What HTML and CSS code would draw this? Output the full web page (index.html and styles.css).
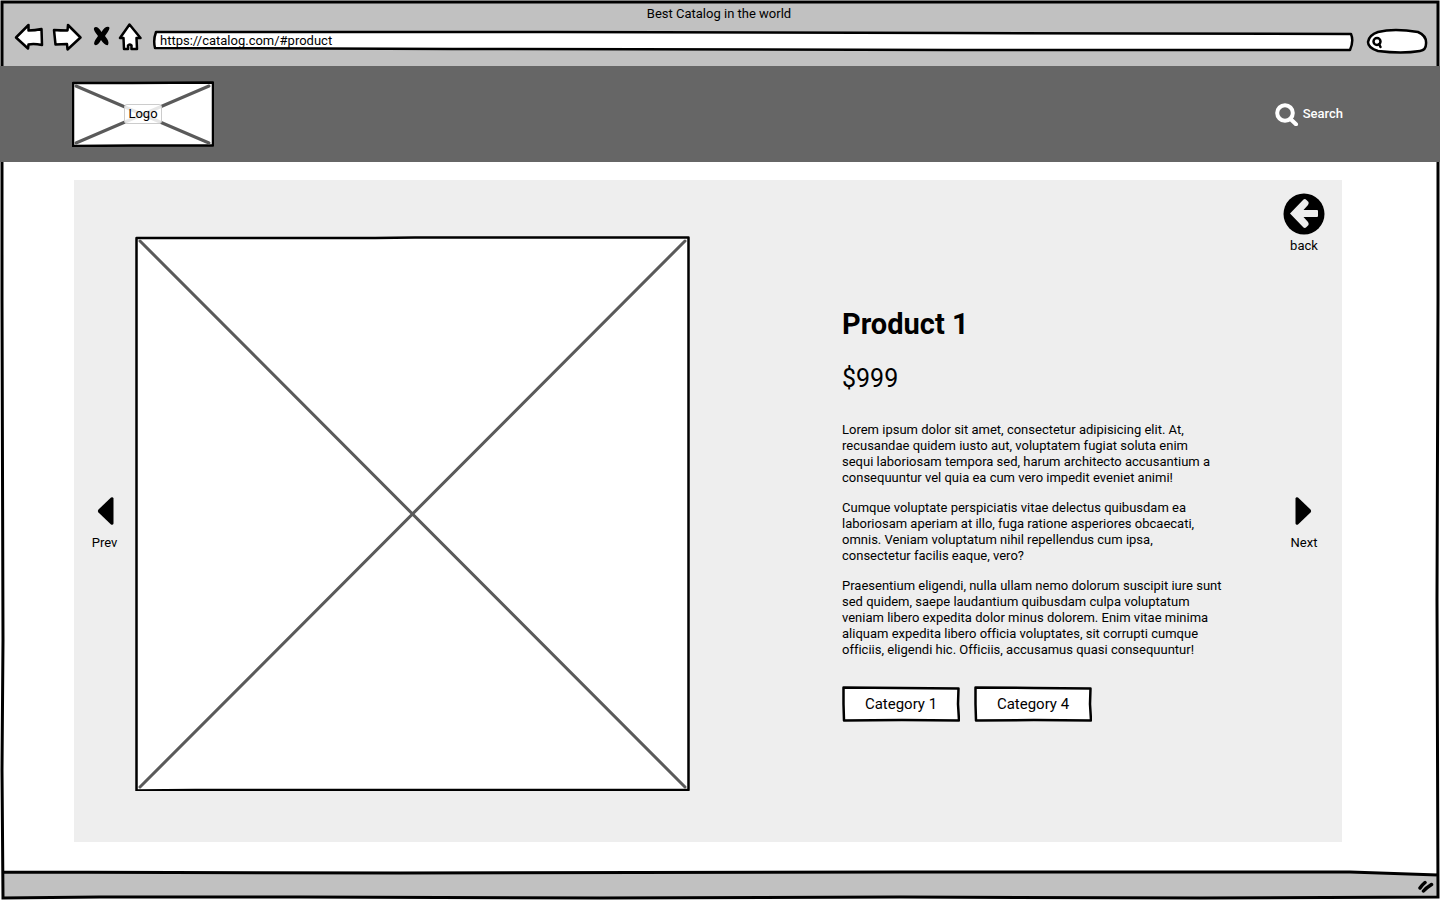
FILE: index.html
```html
<!DOCTYPE html>
<html lang="en">
<head>
<meta charset="utf-8">
<title>Best Catalog in the world</title>
<link rel="stylesheet" href="styles.css">
</head>
<body>
<div class="window">
  <svg class="outline" viewBox="0 0 1440 900" preserveAspectRatio="none" aria-hidden="true">
    <path class="bar-fill" d="M2 2H1438V70H2Z M3 872H1350L1438 875V897L3 898Z"/>
    <path class="line" d="M2 2H1438V300L1437 600L1438 897L1200 898L900 897L600 898L300 897L100 897L3 898L2 770L3 640L2 300Z M3 872L400 873L900 872L1350 872L1438 875"/>
  </svg>

  <div class="chrome">
    <div class="chrome-title">Best Catalog in the world</div>
    <div class="toolbar">
      <div class="tools">
        <button type="button" class="tool" aria-label="Back"><svg width="30" height="28" viewBox="15 23 30 28"><path class="sketch" d="M17 37.500L29.500 25V30.500Q36 30.500 42.500 29L43 45Q35 43.500 29.500 44.500L29 48.500Z"/></svg></button>
        <button type="button" class="tool" aria-label="Forward"><svg width="30" height="28" viewBox="52 23 30 28"><path class="sketch" d="M80.500 37.500L68 25L67.500 30.500Q60 30.500 54 30L55.500 44.500L67 44L67.500 49.500Z"/></svg></button>
        <button type="button" class="tool tool-stop" aria-label="Stop"><svg width="20" height="28" viewBox="92 23 20 28"><path d="M94 28Q97 25 101.500 32Q105 26 109 27Q111 28 105 36Q110 42 108 45Q105 46 101 40Q98 46 95 45Q92 44 98 36Q93 30 94 28Z"/></svg></button>
        <button type="button" class="tool" aria-label="Home"><svg width="24" height="28" viewBox="118 23 24 28"><path class="sketch" d="M129.500 24.500L120 38H123.500L124 49H128V45.500Q129.500 43.500 131.500 45.500V49H137L136.500 38H140.500Z"/></svg></button>
      </div>
      <div class="address">
        <svg class="outline" viewBox="0 0 1200 22" preserveAspectRatio="none" aria-hidden="true"><path class="sketch" d="M4 2L400 2L800 3L1197 4Q1200 11 1196 20L800 20L300 19L3 18Q1 10 4 2Z"/></svg>
        <input class="address-input" type="text" aria-label="Address" value="https://catalog.com/#product">
      </div>
      <div class="find">
        <svg class="outline" viewBox="0 0 62 26" preserveAspectRatio="none" aria-hidden="true"><path class="sketch" d="M12 4Q28 0 52 4Q61 8 60 16Q60 22 54 23Q36 26 12 23Q2 20 2 14Q3 7 12 4Z"/><circle class="lens" cx="11" cy="13.500" r="3.500"/><path class="lens" d="M13 16L14.500 19"/></svg>
        <input class="find-input" type="text" aria-label="Find">
      </div>
    </div>
  </div>

  <header class="site-header">
    <a class="logo" href="#" aria-label="Logo">
      <svg class="outline" viewBox="0 0 142 66" preserveAspectRatio="none" aria-hidden="true"><path class="frame" d="M1 2L60 2L141 1.500V64.500H60L1 65Z"/><path class="cross" d="M4 5L137 62M137 5L4 62"/></svg>
      <span class="logo-label">Logo</span>
    </a>
    <a class="site-search" href="#">
      <svg width="24" height="24" viewBox="0 0 24 24" aria-hidden="true"><circle class="glass" cx="10" cy="11" r="7.800"/><path class="glass" d="M15.500 17L21 22.300"/></svg>
      <span>Search</span>
    </a>
  </header>

  <main class="content">
    <section class="panel">
      <nav class="side side-left">
        <a class="step" href="#"><svg width="18" height="30" viewBox="0 0 18 30" aria-hidden="true"><path d="M17.500 2.500V27.500Q17 29.300 15 28.500L2.500 16.500Q1.300 15 2.500 13.500L15 1.500Q17 .7 17.500 2.500Z"/></svg><span>Prev</span></a>
      </nav>
      <div class="picture">
        <svg class="outline" viewBox="0 0 555 555" preserveAspectRatio="none" aria-hidden="true"><path class="frame" d="M1.500 2L240 2L280 1.500L553.500 1.500V554H60L1.500 554.500Z"/><path class="cross" d="M5 5L550 551M550 5L5 551"/></svg>
      </div>
      <article class="details">
        <h1 class="name">Product 1</h1>
        <div class="price">$999</div>
        <p class="text">Lorem ipsum dolor sit amet, consectetur adipisicing elit. At,<br>recusandae quidem iusto aut, voluptatem fugiat soluta enim<br>sequi laboriosam tempora sed, harum architecto accusantium a<br>consequuntur vel quia ea cum vero impedit eveniet animi!</p>
        <p class="text">Cumque voluptate perspiciatis vitae delectus quibusdam ea<br>laboriosam aperiam at illo, fuga ratione asperiores obcaecati,<br>omnis. Veniam voluptatum nihil repellendus cum ipsa,<br>consectetur facilis eaque, vero?</p>
        <p class="text">Praesentium eligendi, nulla ullam nemo dolorum suscipit iure sunt<br>sed quidem, saepe laudantium quibusdam culpa voluptatum<br>veniam libero expedita dolor minus dolorem. Enim vitae minima<br>aliquam expedita libero officia voluptates, sit corrupti cumque<br>officiis, eligendi hic. Officiis, accusamus quasi consequuntur!</p>
        <div class="categories">
          <button type="button" class="category"><svg class="outline" viewBox="0 0 118 36" preserveAspectRatio="none" aria-hidden="true"><path class="frame" d="M1.500 1.500L60 2L116.500 2.500L116 18L117 34.500L60 34L2 34.500L1.500 18Z"/></svg><span class="category-label">Category 1</span></button>
          <button type="button" class="category"><svg class="outline" viewBox="0 0 118 36" preserveAspectRatio="none" aria-hidden="true"><path class="frame" d="M1.500 1.500L60 2L116.500 2.500L116 18L117 34.500L60 34L2 34.500L1.500 18Z"/></svg><span class="category-label">Category 4</span></button>
        </div>
      </article>
      <nav class="side side-right">
        <a class="return" href="#"><svg width="42" height="42" viewBox="0 0 42 42" aria-hidden="true"><circle cx="21" cy="21" r="20.500"/><path class="arrow" d="M7 20.500L20.500 6.500Q22 5.500 23.500 7L25.500 9Q26 10.500 25 12L20.500 17H34Q35 17 35 18V23Q35 24 34 24H20.500L25 29Q26 30.500 25.500 32L23.500 34Q22 35.500 20.500 34.500Z"/></svg><span>back</span></a>
        <a class="step" href="#"><svg width="18" height="30" viewBox="0 0 18 30" aria-hidden="true"><path d="M.5 2.500V27.500Q1 29.300 3 28.500L15.500 16.500Q16.700 15 15.500 13.500L3 1.500Q1 .7 .5 2.500Z"/></svg><span>Next</span></a>
      </nav>
    </section>
  </main>

  <footer class="status">
    <svg width="18" height="16" viewBox="0 0 18 16" aria-hidden="true"><path class="grip" d="M2 9Q4 6 7 3.500M5.500 12Q8 9 13.500 5.500"/></svg>
  </footer>
</div>
</body>
</html>
```
FILE: styles.css
```css
* { box-sizing: border-box; }

body {
  margin: 0;
  background: #fff;
  color: #000;
  font: 13px/16px Roboto, "Open Sans", sans-serif;
  font-variant-ligatures: none;
}

a { color: inherit; text-decoration: none; }

button, input {
  margin: 0;
  padding: 0;
  border: 0;
  background: none;
  color: inherit;
  font: inherit;
}

svg { display: block; }

.window {
  position: relative;
  display: flex;
  flex-direction: column;
  min-height: 100vh;
}

.window > * { position: relative; }

.outline,
.window > .outline {
  position: absolute;
  inset: 0;
  width: 100%;
  height: 100%;
}

.outline path { vector-effect: non-scaling-stroke; }
.bar-fill { fill: #c1c1c1; }
.line { fill: none; stroke: #000; stroke-width: 3; }
.sketch { fill: #fff; stroke: #000; stroke-width: 2.5; stroke-linejoin: round; }
.lens { fill: none; stroke: #000; stroke-width: 2.5; stroke-linecap: round; }
.frame { fill: #fff; stroke: #000; stroke-width: 2.5; stroke-linejoin: round; }
.cross { fill: none; stroke: #5a5a5a; stroke-width: 3; stroke-linecap: round; }

.chrome {
  display: flex;
  flex-direction: column;
  height: 66px;
  padding: 6px 12px 0 14px;
}

.chrome-title { padding-right: 4px; text-align: center; }

.toolbar { display: flex; align-items: center; gap: 14px; height: 38px; }
.tools { display: flex; gap: 8px; padding-bottom: 8px; }
.tool-stop { margin: 0 -2px 0 2px; }

.address { position: relative; flex: 1; height: 22px; margin: 0 -2px 0 -4px; }
.address-input { position: relative; width: 100%; height: 20px; padding: 0 8px; outline: 0; }

.find { position: relative; width: 62px; height: 26px; }
.find-input { position: relative; width: 100%; height: 26px; padding: 0 8px 0 20px; outline: 0; }

.site-header {
  display: flex;
  align-items: center;
  justify-content: space-between;
  height: 96px;
  padding: 0 97px 0 72px;
  background: #666;
}

.logo {
  position: relative;
  display: flex;
  align-items: center;
  justify-content: center;
  width: 142px;
  height: 66px;
}

.logo-label {
  position: relative;
  padding: 1px 3px;
  border: 1px solid #ccc;
  border-radius: 3px;
  background: rgba(255, 255, 255, .85);
}

.site-search { display: flex; align-items: center; gap: 4px; color: #fff; font-weight: 500; }
.glass { fill: none; stroke: #fff; stroke-width: 4; stroke-linecap: round; }

.content { flex: 1; padding: 18px 98px 30px 74px; }

.panel { display: flex; min-height: 662px; background: #eee; }

.side { display: grid; grid-template-rows: 1fr auto 1fr; justify-items: center; }
.side-left { width: 61px; }
.side-right { width: 76px; }

.step {
  grid-row: 2;
  display: flex;
  flex-direction: column;
  align-items: center;
  gap: 9px;
  padding-top: 25px;
}

.return {
  grid-row: 1;
  display: flex;
  flex-direction: column;
  align-items: center;
  gap: 3px;
  padding-top: 13px;
}

.arrow { fill: #eee; }

.picture {
  position: relative;
  flex: 0 1 555px;
  align-self: flex-start;
  aspect-ratio: 1;
  margin: 56px 0 51px;
}

.details { flex: 1; padding: 128px 0 0 152px; white-space: nowrap; }
.name { margin: 0 0 24px; font-size: 29px; line-height: 32px; }
.price { margin: 0 0 28px; font-size: 25px; line-height: 30px; }
.text { margin: 0 0 14px; }

.categories { display: flex; gap: 14px; padding-top: 14px; }

.category { position: relative; width: 118px; height: 36px; font-size: 15px; }
.category-label { position: relative; }

.status { display: flex; justify-content: flex-end; height: 28px; padding: 7px 4px 0; }
.grip { fill: none; stroke: #000; stroke-width: 3.5; stroke-linecap: round; }
```
